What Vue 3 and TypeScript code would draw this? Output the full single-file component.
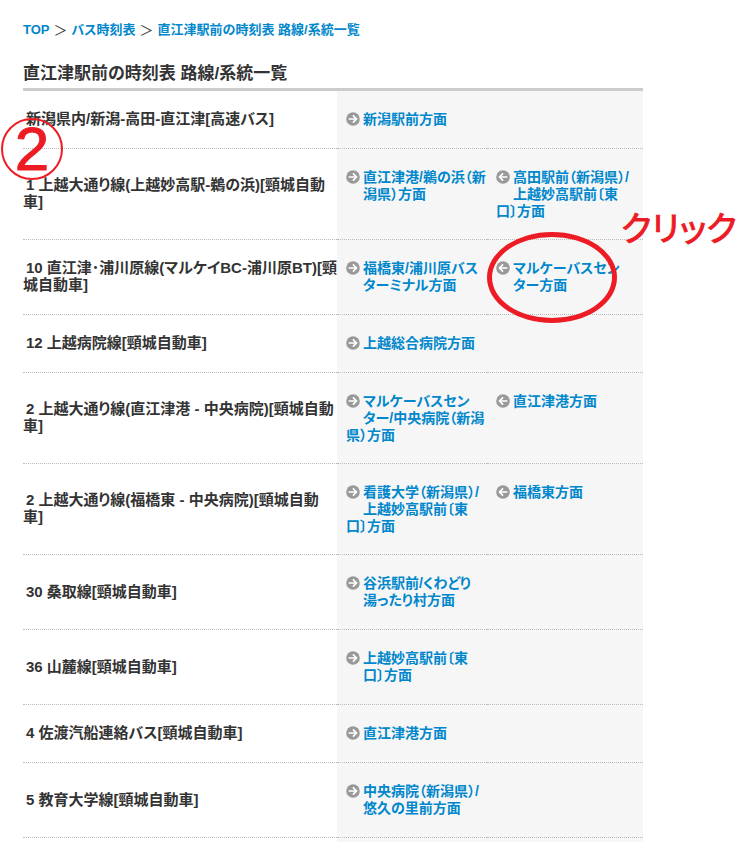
<script setup lang="ts">
interface Direction {
  text: string
  back?: boolean
}

interface Route {
  name: string
  directions: Direction[]
}

const routes: Route[] = [
  { name: '新潟県内/新潟-高田-直江津[高速バス]', directions: [{ text: '新潟駅前方面' }] },
  {
    name: '1 上越大通り線(上越妙高駅-鵜の浜)[頸城自動\n車]',
    directions: [
      { text: '直江津港/鵜の浜（新\n潟県）方面' },
      { text: '高田駅前（新潟県）/\n上越妙高駅前〔東\n口〕方面', back: true },
    ],
  },
  {
    name: '10 直江津･浦川原線(マルケイBC-浦川原BT)[頸\n城自動車]',
    directions: [
      { text: '福橋東/浦川原バス\nターミナル方面' },
      { text: 'マルケーバスセン\nター方面', back: true },
    ],
  },
  { name: '12 上越病院線[頸城自動車]', directions: [{ text: '上越総合病院方面' }] },
  {
    name: '2 上越大通り線(直江津港 - 中央病院)[頸城自動\n車]',
    directions: [
      { text: 'マルケーバスセン\nター/中央病院（新潟\n県）方面' },
      { text: '直江津港方面', back: true },
    ],
  },
  {
    name: '2 上越大通り線(福橋東 - 中央病院)[頸城自動\n車]',
    directions: [
      { text: '看護大学（新潟県）/\n上越妙高駅前〔東\n口〕方面' },
      { text: '福橋東方面', back: true },
    ],
  },
  { name: '30 桑取線[頸城自動車]', directions: [{ text: '谷浜駅前/くわどり\n湯ったり村方面' }] },
  { name: '36 山麓線[頸城自動車]', directions: [{ text: '上越妙高駅前〔東\n口〕方面' }] },
  { name: '4 佐渡汽船連絡バス[頸城自動車]', directions: [{ text: '直江津港方面' }] },
  { name: '5 教育大学線[頸城自動車]', directions: [{ text: '中央病院（新潟県）/\n悠久の里前方面' }] },
]

const lineCount = (text: string): number => text.split('\n').length

const isDeep = (route: Route): boolean => route.directions.some((d) => lineCount(d.text) > 2)
</script>

<template>
  <div class="page">
    <main class="content">
      <nav class="crumbs" aria-label="breadcrumb">
        <a href="#">TOP</a>
        <span class="sep">＞</span>
        <a href="#">バス時刻表</a>
        <span class="sep">＞</span>
        <a href="#">直江津駅前の時刻表 路線/系統一覧</a>
      </nav>

      <h1>直江津駅前の時刻表 路線/系統一覧</h1>

      <table>
        <colgroup>
          <col />
          <col class="col-out" />
          <col class="col-back" />
        </colgroup>
        <tbody>
          <tr v-for="(route, i) in routes" :key="i" :class="{ deep: isDeep(route) }">
            <th scope="row">{{ route.name }}</th>
            <td v-for="n in 2" :key="n">
              <template v-if="route.directions[n - 1]">
                <svg
                  class="arrow"
                  :class="{
                    back: route.directions[n - 1].back,
                    multi: lineCount(route.directions[n - 1].text) > 1,
                  }"
                  viewBox="0 0 14 14"
                  aria-hidden="true"
                >
                  <circle cx="7" cy="7" r="6.8" fill="#999" />
                  <path d="M2.6 7H10.4M6.9 3.4L10.5 7L6.9 10.6" fill="none" stroke="#fff" stroke-width="1.7" />
                </svg>
                <a href="#">{{ route.directions[n - 1].text }}</a>
              </template>
            </td>
          </tr>
          <tr class="tail" aria-hidden="true">
            <th></th>
            <td></td>
            <td></td>
          </tr>
        </tbody>
      </table>
    </main>

    <span class="step">2</span>
    <span class="ring"></span>
    <span class="note">クリック</span>
  </div>
</template>

<style>
body {
  margin: 0;
  background: #fff;
}
</style>

<style scoped>
.page {
  position: relative;
  overflow: hidden;
  color: #333;
  font-family: "Liberation Sans", "Noto Sans CJK JP", sans-serif;
  font-feature-settings: "palt";
}

.content {
  max-width: 620px;
  padding: 20px 0 0 23px;
}

a {
  color: #0087cc;
  font-weight: bold;
  text-decoration: none;
}

.crumbs {
  display: flex;
  align-items: center;
  gap: 4px;
  height: 20px;
  font-size: 13px;
  line-height: 20px;
  white-space: nowrap;
}

.sep {
  font-size: 14px;
}

h1 {
  margin: 21px 0 0;
  padding-bottom: 2px;
  border-bottom: 3px solid #ccc;
  font-size: 17px;
  line-height: 25px;
  white-space: nowrap;
}

table {
  width: 100%;
  table-layout: fixed;
  border-spacing: 0;
}

.col-out {
  width: 150px;
}

.col-back {
  width: 156px;
}

th,
td {
  height: 17px;
  padding: 20px 0;
  border-bottom: 1px dotted #bbb;
  line-height: 17px;
  text-align: left;
  white-space: pre;
}

th {
  padding: 19px 0 21px;
  font-size: 15px;
  text-indent: 3px;
  vertical-align: middle;
}

td {
  padding-left: 9px;
  background: #f6f6f6;
  font-size: 14px;
  vertical-align: top;
  white-space: pre-line;
}

.deep td {
  padding-bottom: 19px;
}

.tail th,
.tail td {
  height: 4px;
  padding: 0;
  border: 0;
}

.arrow {
  float: left;
  width: 14px;
  height: 14px;
  margin: 1px 3px 2px 0;
}

.arrow.multi {
  margin-bottom: 16px;
}

.arrow.back {
  transform: scaleX(-1);
}

.step,
.ring,
.note {
  position: absolute;
  color: #ed1c24;
}

.step,
.note {
  -webkit-text-stroke: 1px #ed1c24;
}

.step {
  top: 118px;
  left: 1px;
  box-sizing: border-box;
  width: 62px;
  height: 62px;
  border: 2px solid;
  border-radius: 50%;
  font-size: 62px;
  line-height: 58px;
  text-align: center;
}

.ring {
  top: 232px;
  left: 487px;
  box-sizing: border-box;
  width: 130px;
  height: 91px;
  border: 5px solid;
  border-radius: 50%;
}

.note {
  top: 204px;
  left: 621px;
  font-size: 34px;
  line-height: 50px;
  white-space: nowrap;
}
</style>
